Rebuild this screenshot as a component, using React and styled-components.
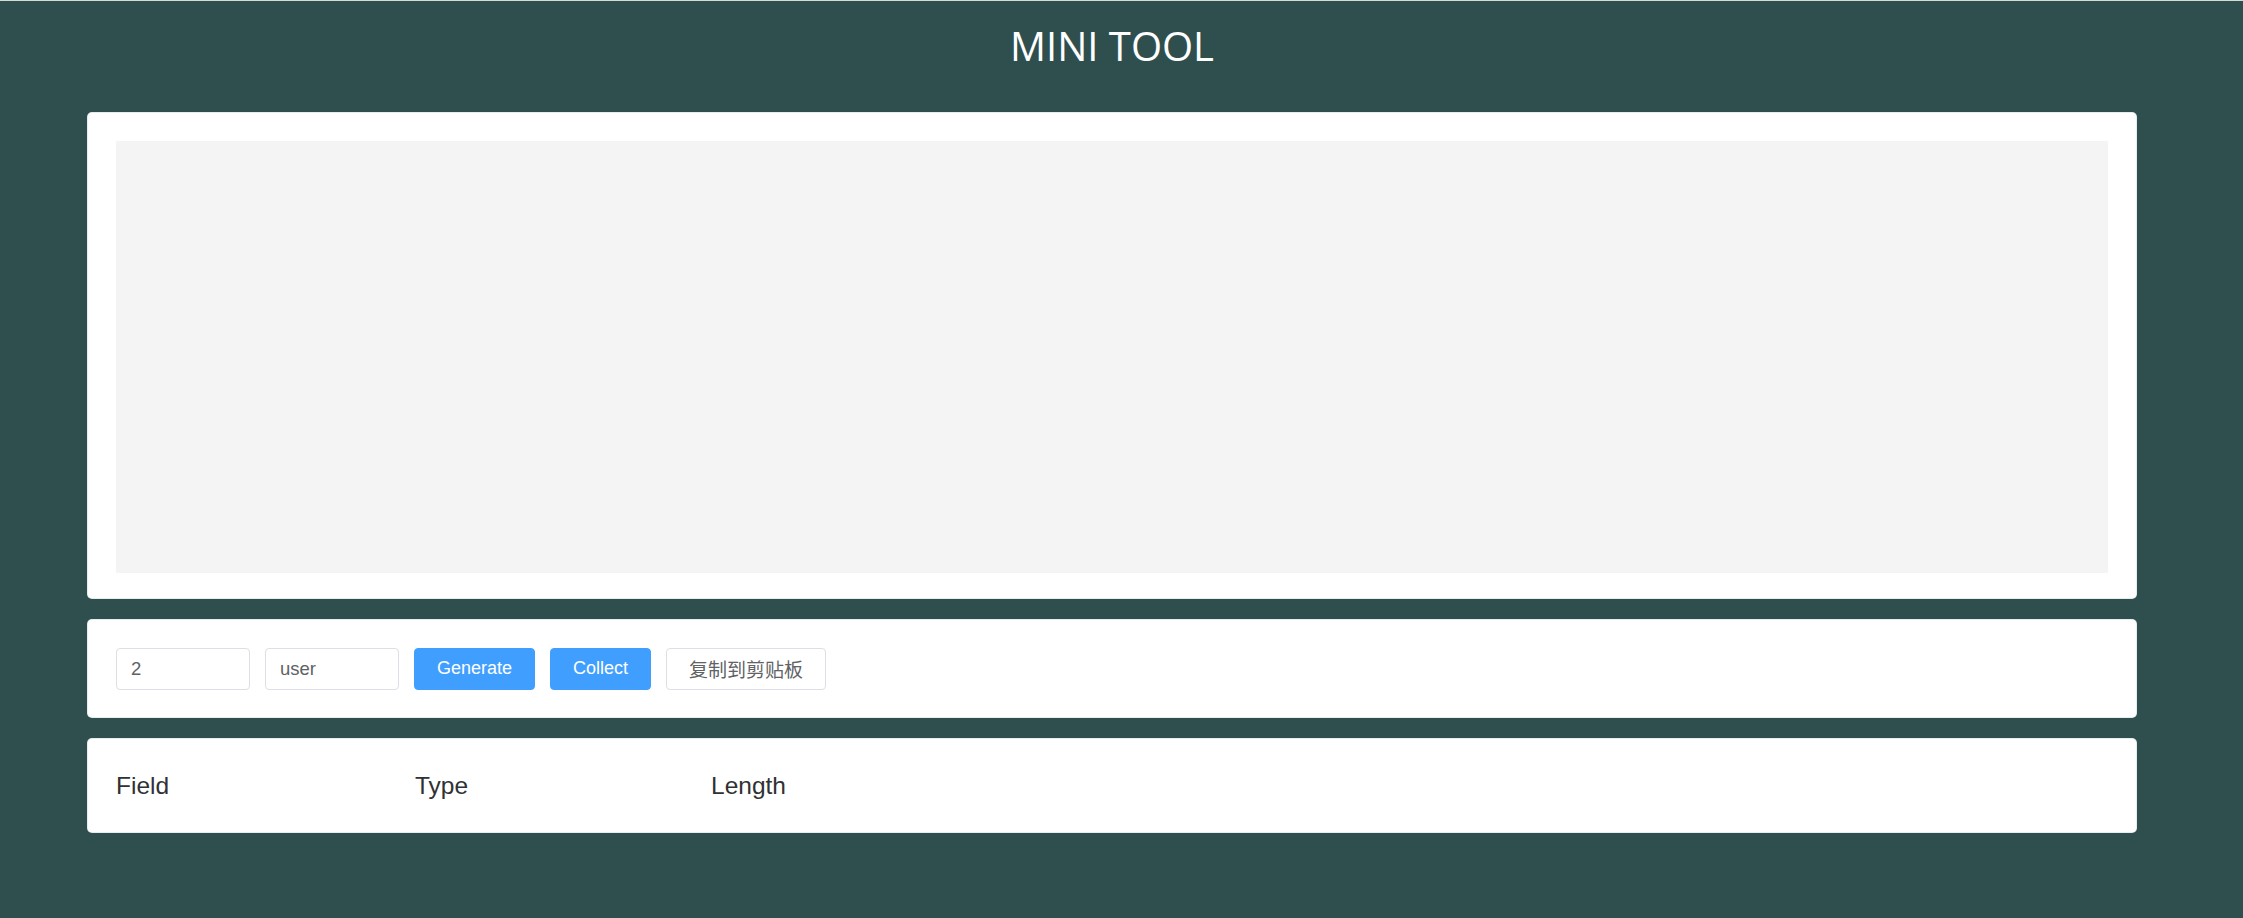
import React, { useState } from "react";
import styled, { createGlobalStyle } from "styled-components";

const GlobalStyle = createGlobalStyle`
  html, body {
    margin: 0;
    padding: 0;
    background: #2f4f4f;
  }
  body {
    border-top: 1px solid #d6d9d9;
    font-family: "Liberation Sans", Arial, "Noto Sans CJK SC", sans-serif;
  }
`;

const Page = styled.div`
  padding-right: 19px;
  min-height: 917px;
`;

const Title = styled.h1`
  margin: 0;
  padding-top: 24px;
  font-family: "Open Sans", "Noto Sans", sans-serif;
  font-weight: 400;
  font-size: 40px;
  line-height: 42px;
  color: #fff;
  text-align: center;
`;

const Main = styled.main`
  width: 2048px;
  margin: 46px auto 0;
  display: flex;
  flex-direction: column;
  gap: 22px;
`;

const Card = styled.section`
  box-sizing: border-box;
  background: #fff;
  border-radius: 4px;
  box-shadow: 0 0 0 1px #e4eef0;
  padding: ${(p) => p.$pad || "28px"};
  height: ${(p) => (p.$h ? `${p.$h}px` : "auto")};
  display: flex;
  align-items: center;
`;

const Canvas = styled.div`
  flex: 1;
  height: 432px;
  background: #f4f4f4;
`;

const Toolbar = styled.div`
  display: flex;
  align-items: center;
  gap: 15px;
`;

const Input = styled.input`
  box-sizing: border-box;
  width: 134px;
  height: 42px;
  padding: 0 14px;
  border: 1px solid #dcdfe6;
  border-radius: 4px;
  font-family: "Liberation Sans", Arial, sans-serif;
  font-size: 18.5px;
  color: #606266;
  outline: none;
`;

const Button = styled.button`
  box-sizing: border-box;
  height: 42px;
  padding: 0 22px;
  border-radius: 4px;
  border: 1px solid ${(p) => (p.$primary ? "#409eff" : "#dcdfe6")};
  background: ${(p) => (p.$primary ? "#409eff" : "#fff")};
  color: ${(p) => (p.$primary ? "#fff" : "#606266")};
  font-family: "Liberation Sans", Arial, "Noto Sans CJK SC", sans-serif;
  font-size: 18px;
  cursor: pointer;
`;

const CjkLabel = styled.span`
  font-family: "Noto Sans CJK SC", sans-serif;
  font-size: 19px;
`;

const HeadRow = styled.div`
  display: grid;
  grid-template-columns: 299px 296px auto;
  font-size: 24.5px;
  color: #303133;
`;

export default function App() {
  const [count, setCount] = useState("2");
  const [table, setTable] = useState("user");

  return (
    <Page>
      <GlobalStyle />
      <Title>MINI TOOL</Title>
      <Main>
        <Card $pad="28px 28px 25px">
          <Canvas />
        </Card>
        <Card $h={97}>
          <Toolbar>
            <Input value={count} onChange={(e) => setCount(e.target.value)} />
            <Input value={table} onChange={(e) => setTable(e.target.value)} />
            <Button $primary>Generate</Button>
            <Button $primary>Collect</Button>
            <Button>
              <CjkLabel>复制到剪贴板</CjkLabel>
            </Button>
          </Toolbar>
        </Card>
        <Card $h={93} $pad="0 28px">
          <HeadRow>
            <span>Field</span>
            <span>Type</span>
            <span>Length</span>
          </HeadRow>
        </Card>
      </Main>
    </Page>
  );
}
